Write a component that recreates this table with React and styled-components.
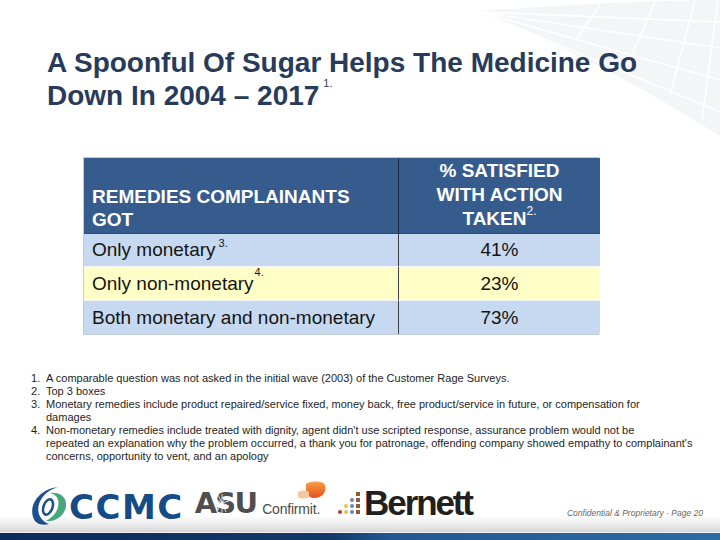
import React from 'react';
import styled, { createGlobalStyle } from 'styled-components';

const Global = createGlobalStyle`
  html, body { margin: 0; padding: 0; background: #fff; }
  body { width: 720px; height: 540px; overflow: hidden; font-family: "Liberation Sans", Arial, sans-serif; }
`;

const Slide = styled.div`
  position: relative;
  width: 720px;
  height: 540px;
  overflow: hidden;
  background: #fff;
  display: flex;
  flex-direction: column;
`;

const Decor = styled.svg`
  position: absolute;
  top: 0;
  right: 0;
  pointer-events: none;
`;

const Title = styled.h1`
  position: relative;
  margin: 46px 0 0 47px;
  font-family: "Liberation Sans", Arial, sans-serif;
  font-weight: 700;
  font-size: 28px;
  line-height: 33px;
  color: #283b5a;
`;

const TitleNote = styled.span`
  display: inline-block;
  vertical-align: top;
  margin-left: 4px;
  margin-top: -1px;
  font-size: 11px;
  line-height: 11px;
  font-weight: 400;
  color: #283b5a;
`;

const Table = styled.div`
  margin: 45px 0 0 83px;
  width: 516px;
  display: grid;
  grid-template-columns: 315px 201px;
  border: 1px solid #c3ccd8;
  box-sizing: border-box;
`;

const HeadCell = styled.div`
  height: 76px;
  box-sizing: border-box;
  background: #365c8d;
  color: #fff;
  font-weight: 700;
  font-size: 19px;
  line-height: ${p => (p.$center ? '24px' : '22.5px')};
  display: flex;
  align-items: flex-end;
  justify-content: ${p => (p.$center ? 'center' : 'flex-start')};
  text-align: ${p => (p.$center ? 'center' : 'left')};
  padding: 0 0 ${p => (p.$center ? '0' : '2px')} ${p => (p.$center ? '0' : '8px')};
  border-right: ${p => (p.$center ? 'none' : '1px solid #1c2940')};
  border-bottom: 1px solid #2c4a72;
`;

const Cell = styled.div`
  height: ${p => p.$h}px;
  box-sizing: border-box;
  background: ${p => (p.$yellow ? '#fefec6' : '#c6d9f1')};
  color: #141414;
  font-size: 19px;
  line-height: 22px;
  display: flex;
  align-items: center;
  justify-content: ${p => (p.$center ? 'center' : 'flex-start')};
  padding-left: ${p => (p.$center ? '0' : '8px')};
  border-right: ${p => (p.$center ? 'none' : '1px solid #3a3f48')};
  border-bottom: ${p => (p.$last ? 'none' : '1px solid #f4f6fa')};
`;

const Sup = styled.span`
  position: relative;
  top: ${p => p.$top}px;
  margin-left: ${p => p.$ml}px;
  font-size: 11px;
  line-height: 11px;
  font-weight: 400;
  align-self: flex-start;
`;

const HeadLine = styled.span`
  display: block;
`;

const HeadSup = styled.span`
  position: relative;
  top: -10px;
  margin-left: 0px;
  font-size: 12px;
  font-weight: 400;
`;

const Notes = styled.ol`
  list-style: none;
  margin: 37px 0 0 0;
  padding: 0 4px 0 31px;
  font-size: 11px;
  line-height: 13px;
  color: #1e1e1e;
`;

const Note = styled.li`
  display: grid;
  grid-template-columns: 15px 1fr;
`;

const Num = styled.span``;

const Footer = styled.footer`
  margin-top: auto;
  display: flex;
  flex-direction: column;
`;

const LogoRow = styled.div`
  height: 53px;
  display: flex;
  align-items: flex-end;
  padding: 0 17px 0 28px;
  background: linear-gradient(to bottom, #fff 0%, #fff 68%, #ececec 86%, #d6d6d6 100%);
`;

const CcmcLogo = styled.div`
  display: flex;
  align-items: flex-end;
  margin-bottom: 6px;
`;

const CcmcText = styled.span`
  font-family: "DejaVu Sans", sans-serif;
  font-weight: 700;
  font-size: 34px;
  letter-spacing: 1.5px;
  line-height: 30px;
  color: #154b86;
  margin: 0 0 4px 1px;
`;

const AsuLogo = styled.div`
  position: relative;
  margin: 0 0 16px 11px;
  font-family: "DejaVu Sans", sans-serif;
  font-weight: 700;
  font-size: 29px;
  line-height: 25px;
  letter-spacing: -1.8px;
  color: #4f4f4f;
`;

const Rays = styled.svg`
  position: absolute;
  left: 19px;
  top: 1px;
`;

const Confirmit = styled.div`
  display: flex;
  flex-direction: column;
  align-items: flex-end;
  margin: 0 0 16px 6px;
`;

const ConfirmitText = styled.span`
  font-family: "Liberation Sans", Arial, sans-serif;
  font-size: 14px;
  line-height: 14px;
  letter-spacing: -0.2px;
  color: #4a4a4a;
`;

const Blob = styled.svg`
  margin-right: -7px;
  margin-bottom: 1px;
`;

const Bernett = styled.div`
  display: flex;
  align-items: flex-end;
  margin: 0 0 16px 17px;
`;

const BernettText = styled.span`
  font-family: "Liberation Sans", Arial, sans-serif;
  font-weight: 700;
  font-size: 35px;
  line-height: 27px;
  letter-spacing: -2.1px;
  color: #231f20;
  margin-left: 3px;
`;

const Confidential = styled.span`
  margin: 0 0 14px auto;
  font-family: "Liberation Sans", Arial, sans-serif;
  font-style: italic;
  font-size: 8.5px;
  color: #666;
`;

const Bar = styled.div`
  height: 7px;
  border-top: 1px solid #f2f2f2;
  background: linear-gradient(to right, #0d2b58 0%, #133869 46%, #23578f 54%, #2c6ba6 100%);
`;

const rows = [
  { label: 'Only monetary', note: '3.', top: 4, ml: 3, value: '41%', h: 33 },
  { label: 'Only non-monetary', note: '4.', top: 0, ml: 1, value: '23%', h: 34, yellow: true },
  { label: 'Both monetary and non-monetary', value: '73%', h: 33, last: true },
];

const notes = [
  ['A comparable question was not asked in the initial wave (2003) of the Customer Rage Surveys.'],
  ['Top 3 boxes'],
  [
    'Monetary remedies include product repaired/service fixed, money back, free product/service in future, or compensation for',
    'damages',
  ],
  [
    "Non-monetary remedies include treated with dignity, agent didn't use scripted response, assurance problem would not be",
    "repeated an explanation why the problem occurred, a thank you for patronage, offending company showed empathy to complainant's",
    'concerns,  opportunity to vent, and an apology',
  ],
];

export default function App() {
  return (
    <Slide>
      <Global />
      <Decor width="240" height="140" viewBox="0 0 240 140">
        <path d="M0 11 C 80 5, 160 1, 240 0 L240 136 C 190 105, 110 55, 0 13 Z" fill="#f4f5f7" />
        <g stroke="#fff" strokeWidth="1.6" fill="none">
          <path d="M0 12 L 240 22" />
          <path d="M0 12 L 240 48" />
          <path d="M0 12 L 240 80" />
          <path d="M0 12 L 240 112" />
          <path d="M120 5 L 96 40" />
          <path d="M175 2 L 148 64" />
          <path d="M215 1 L 190 95" />
          <path d="M238 0 L 222 120" />
        </g>
      </Decor>
      <Title>
        A Spoonful Of Sugar Helps The Medicine Go
        <br />
        Down In 2004 – 2017<TitleNote>1.</TitleNote>
      </Title>
      <Table>
        <HeadCell>
          <div>
            <HeadLine>REMEDIES COMPLAINANTS</HeadLine>
            <HeadLine>GOT</HeadLine>
          </div>
        </HeadCell>
        <HeadCell $center>
          <div>
            <HeadLine>% SATISFIED</HeadLine>
            <HeadLine>WITH ACTION</HeadLine>
            <HeadLine>
              TAKEN<HeadSup>2.</HeadSup>
            </HeadLine>
          </div>
        </HeadCell>
        {rows.map(r => (
          <React.Fragment key={r.label}>
            <Cell $h={r.h} $yellow={r.yellow} $last={r.last}>
              {r.label}
              {r.note && (
                <Sup $top={r.top} $ml={r.ml}>
                  {r.note}
                </Sup>
              )}
            </Cell>
            <Cell $h={r.h} $yellow={r.yellow} $last={r.last} $center>
              {r.value}
            </Cell>
          </React.Fragment>
        ))}
      </Table>
      <Notes>
        {notes.map((lines, i) => (
          <Note key={i}>
            <Num>{i + 1}.</Num>
            <span>
              {lines.map((l, j) => (
                <React.Fragment key={j}>
                  {j > 0 && <br />}
                  {l}
                </React.Fragment>
              ))}
            </span>
          </Note>
        ))}
      </Notes>
      <Footer>
        <LogoRow>
          <CcmcLogo>
            <svg width="40" height="42" viewBox="0 0 40 42">
              <path d="M30 3 C 12 5, 1 20, 5 33 C 7 40, 14 42, 21 40 C 10 36, 7 24, 14 14 C 18 8, 24 5, 30 3 Z" fill="#1b4f8e" />
              <path d="M22 9 C 34 7, 41 16, 37 26 C 34 34, 25 38, 18 37 C 27 32, 32 24, 30 16 C 29 12, 26 10, 22 9 Z" fill="#49a57c" />
              <ellipse cx="20" cy="23" rx="4.5" ry="8" transform="rotate(20 20 23)" fill="none" stroke="#1b4f8e" strokeWidth="2.5" />
            </svg>
            <CcmcText>CCMC</CcmcText>
          </CcmcLogo>
          <AsuLogo>
            ASU
            <Rays width="16" height="22" viewBox="0 0 16 22">
              <g stroke="#fff" strokeWidth="0.8">
                <path d="M8 11 L8 2 M8 11 L13 4 M8 11 L15 9 M8 11 L15 14 M8 11 L12 20 M8 11 L8 21 M8 11 L3 19 M8 11 L1 13 M8 11 L1 7 M8 11 L4 3" />
              </g>
            </Rays>
          </AsuLogo>
          <Confirmit>
            <Blob width="30" height="21" viewBox="0 0 30 21">
              <defs>
                <linearGradient id="bg" x1="0" y1="0" x2="0" y2="1">
                  <stop offset="0" stopColor="#f7a04a" />
                  <stop offset="1" stopColor="#e5501a" />
                </linearGradient>
              </defs>
              <path d="M9 4 C 12 1, 26 0, 28 5 C 30 11, 26 18, 17 18 C 11 18, 8 12, 9 4 Z" fill="url(#bg)" />
              <path d="M1 12 C 4 10, 10 10, 12 12 L 12 17 C 9 19, 3 19, 1 17 Z" fill="#f3c7a3" />
            </Blob>
            <ConfirmitText>Confirmit.</ConfirmitText>
          </Confirmit>
          <Bernett>
            <svg width="24" height="26" viewBox="0 0 24 26">
              <rect x="19" y="2" width="4" height="4" fill="#8c5a3c" />
              <rect x="19" y="8" width="4" height="4" fill="#8c5a3c" />
              <rect x="19" y="14" width="4" height="4" fill="#8c5a3c" />
              <rect x="19" y="20" width="4" height="4" fill="#8c5a3c" />
              <circle cx="15" cy="10" r="2" fill="#6b86a8" />
              <circle cx="15" cy="16" r="2" fill="#6b86a8" />
              <circle cx="15" cy="22" r="2" fill="#6b86a8" />
              <circle cx="9" cy="16" r="2" fill="#e0c24a" />
              <circle cx="9" cy="22" r="2" fill="#e0c24a" />
              <circle cx="3" cy="22" r="2" fill="#b23a32" />
            </svg>
            <BernettText>Bernett</BernettText>
          </Bernett>
          <Confidential>Confidential &amp; Proprietary · Page 20</Confidential>
        </LogoRow>
        <Bar />
      </Footer>
    </Slide>
  );
}
